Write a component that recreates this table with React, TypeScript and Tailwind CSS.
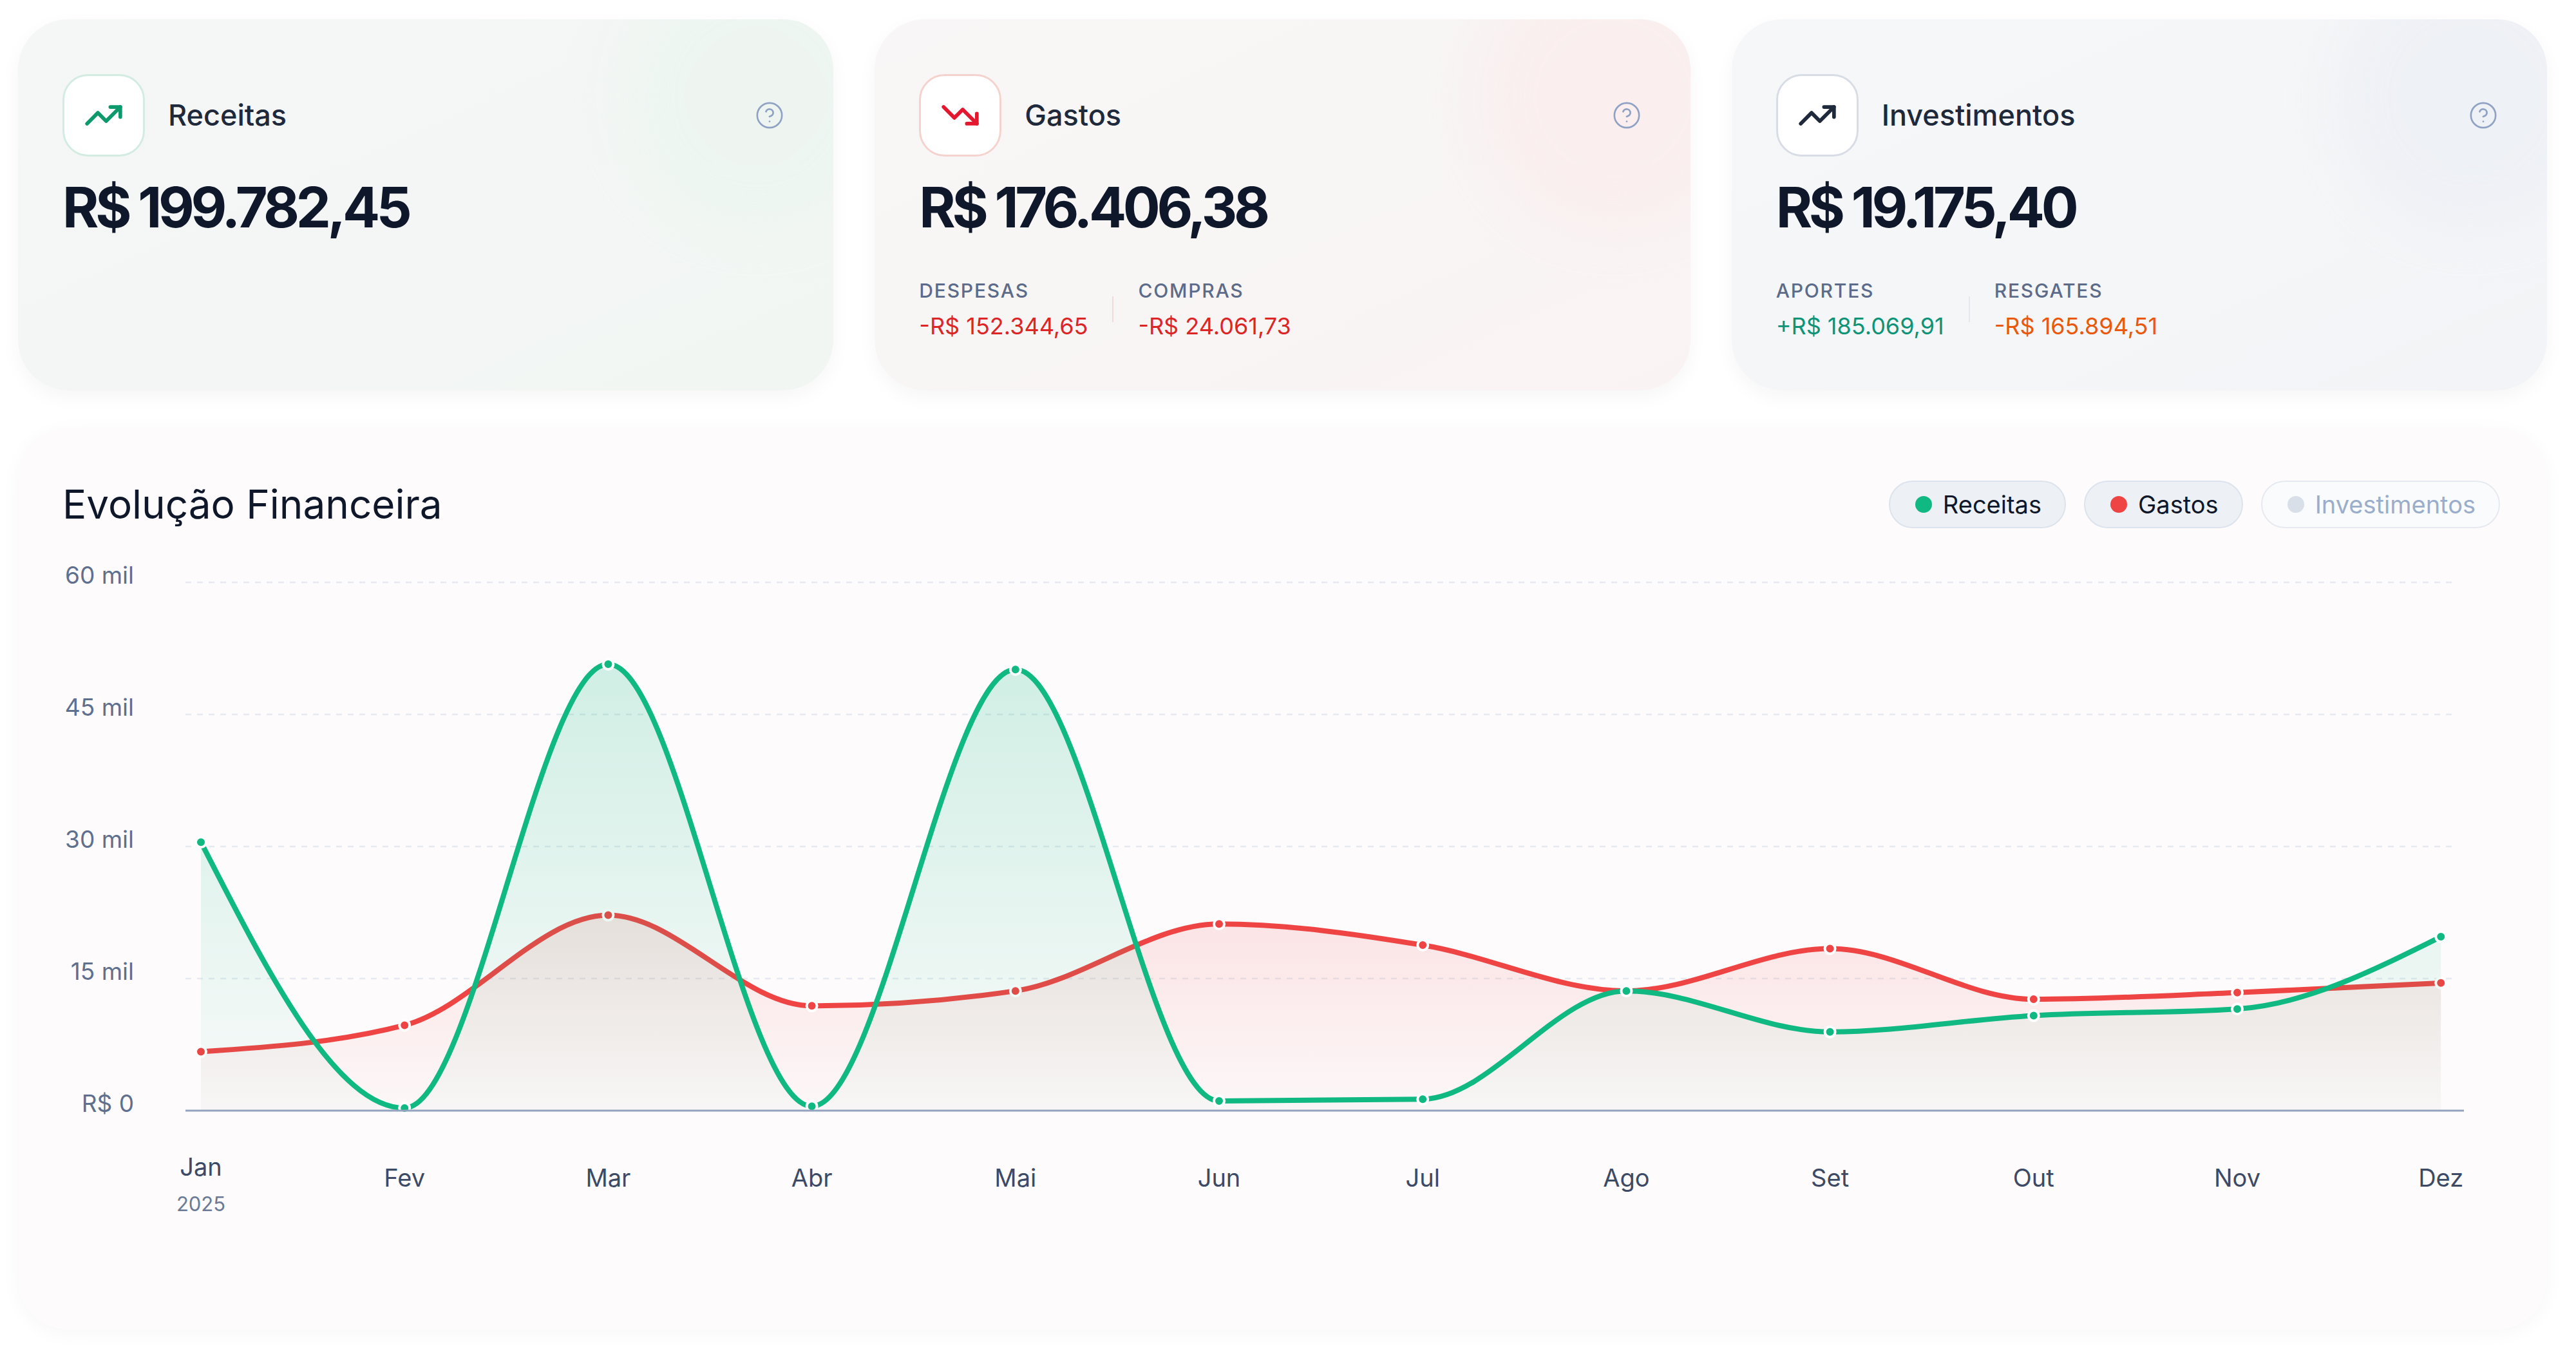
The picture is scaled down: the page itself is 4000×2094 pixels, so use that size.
import { TrendingUp, TrendingDown, CircleHelp } from "lucide-react";

// valores mensais (R$)
const months = ["Jan", "Fev", "Mar", "Abr", "Mai", "Jun", "Jul", "Ago", "Set", "Out", "Nov", "Dez"];
const receitas = [30500, 300, 50700, 500, 50100, 1100, 1300, 13600, 8950, 10800, 11550, 19750];
const gastos = [6700, 9700, 22200, 11900, 13600, 21200, 18800, 13600, 18400, 12650, 13400, 14500];

const X0 = 284;
const STEP = 316.2;
const BASE = 864;
const TOP = 44;
const xOf = (i: number) => X0 + i * STEP;
const yOf = (v: number) => BASE - (v / 60000) * (BASE - TOP);

type Pt = [number, number];

// curva monotone (mesma ideia do d3 curveMonotoneX)
function monotonePath(pts: Pt[]) {
  const n = pts.length;
  const m: number[] = new Array(n).fill(0);
  for (let i = 1; i < n - 1; i++) {
    const [x0, y0] = pts[i - 1];
    const [x1, y1] = pts[i];
    const [x2, y2] = pts[i + 1];
    const h0 = x1 - x0;
    const h1 = x2 - x1;
    const s0 = (y1 - y0) / h0;
    const s1 = (y2 - y1) / h1;
    const p = (s0 * h1 + s1 * h0) / (h0 + h1);
    m[i] = (Math.sign(s0) + Math.sign(s1)) * Math.min(Math.abs(s0), Math.abs(s1), 0.5 * Math.abs(p)) || 0;
  }
  m[0] = (3 * (pts[1][1] - pts[0][1]) / (pts[1][0] - pts[0][0]) - m[1]) / 2;
  m[n - 1] = (3 * (pts[n - 1][1] - pts[n - 2][1]) / (pts[n - 1][0] - pts[n - 2][0]) - m[n - 2]) / 2;
  let d = `M${pts[0][0]},${pts[0][1]}`;
  for (let i = 0; i < n - 1; i++) {
    const [x0, y0] = pts[i];
    const [x1, y1] = pts[i + 1];
    const dx = (x1 - x0) / 3;
    d += ` C${x0 + dx},${y0 + dx * m[i]} ${x1 - dx},${y1 - dx * m[i + 1]} ${x1},${y1}`;
  }
  return d;
}

function Series({ data, color, grad }: { data: number[]; color: string; grad: string }) {
  const pts: Pt[] = data.map((v, i) => [xOf(i), yOf(v)]);
  const line = monotonePath(pts);
  const area = `${line} L${pts[pts.length - 1][0]},${BASE} L${pts[0][0]},${BASE} Z`;
  return (
    <g>
      <path d={area} fill={`url(#${grad})`} />
      <path d={line} fill="none" stroke={color} strokeWidth={8} strokeLinecap="round" />
      {pts.map(([x, y], i) => (
        <circle key={i} cx={x} cy={y} r={8} fill={color} stroke="#ffffff" strokeWidth={4} />
      ))}
    </g>
  );
}

function Chart() {
  const grid = [60000, 45000, 30000, 15000];
  const ticks = [
    { v: 60000, t: "60 mil" },
    { v: 45000, t: "45 mil" },
    { v: 30000, t: "30 mil" },
    { v: 15000, t: "15 mil" },
    { v: 0, t: "R$ 0" },
  ];
  return (
    <svg width={3927} height={1100} viewBox="0 0 3927 1100" className="block">
      <defs>
        <linearGradient id="gRec" x1="0" y1="0" x2="0" y2="1">
          <stop offset="0%" stopColor="#10b981" stopOpacity={0.19} />
          <stop offset="100%" stopColor="#10b981" stopOpacity={0.02} />
        </linearGradient>
        <linearGradient id="gGas" x1="0" y1="0" x2="0" y2="1">
          <stop offset="0%" stopColor="#ef4444" stopOpacity={0.13} />
          <stop offset="100%" stopColor="#ef4444" stopOpacity={0.02} />
        </linearGradient>
      </defs>
      {grid.map((v) => (
        <line key={v} x1={260} x2={3785} y1={yOf(v)} y2={yOf(v)} stroke="#e6e9ef" strokeWidth={2.5} strokeDasharray="9 9" />
      ))}
      {ticks.map((k) => (
        <text
          key={k.t}
          x={180}
          y={yOf(k.v) - 8}
          textAnchor="end"
          dominantBaseline="middle"
          fontSize={37}
          fill="#5f6f8e"
          fontFamily="Inter, sans-serif"
        >
          {k.t}
        </text>
      ))}
      <Series data={gastos} color="#ef4444" grad="gGas" />
      <Series data={receitas} color="#10b981" grad="gRec" />
      <line x1={260} x2={3798} y1={BASE} y2={BASE} stroke="#94a3bd" strokeWidth={3} />
      {months.map((m, i) =>
        i === 0 ? (
          <g key={m}>
            <text x={xOf(i)} y={955} textAnchor="middle" dominantBaseline="middle" fontSize={38} fill="#3c4a66" fontFamily="Inter, sans-serif">
              {m}
            </text>
            <text x={xOf(i)} y={1012} textAnchor="middle" dominantBaseline="middle" fontSize={31} fill="#6b7a96" fontFamily="Inter, sans-serif">
              2025
            </text>
          </g>
        ) : (
          <text key={m} x={xOf(i)} y={972} textAnchor="middle" dominantBaseline="middle" fontSize={38} fill="#3c4a66" fontFamily="Inter, sans-serif">
            {m}
          </text>
        )
      )}
    </svg>
  );
}

function SubValue({ label, value, color }: { label: string; value: string; color: string }) {
  return (
    <div className="flex flex-col gap-[22px]">
      <span className="text-[30px] leading-none font-medium tracking-[0.06em] uppercase text-[#5c6b89]">{label}</span>
      <span className={`text-[36px] leading-none ${color}`}>{value}</span>
    </div>
  );
}

export default function App() {
  return (
    <div className="min-h-screen bg-white font-['Inter','Noto_Sans',sans-serif] pl-[28px] pr-[45px] pt-[30px] pb-[30px]">
      <div className="grid grid-cols-3 gap-[64px]">
        {/* Receitas */}
        <div className="relative h-[576px] overflow-hidden rounded-[78px] bg-gradient-to-br from-[#f5f6f6] via-[#f4f6f5] to-[#f1f6f3] shadow-[0_10px_30px_rgba(15,23,42,0.04)] pl-[69px] pr-[76px] pt-[85px]">
          <div className="absolute -right-[90px] -top-[90px] h-[420px] w-[420px] rounded-full bg-[#ebf6f0] opacity-70 blur-2xl" />
          <div className="relative flex items-center">
            <div className="flex h-[128px] w-[128px] items-center justify-center rounded-[40px] border-[3px] border-[#d3ece2] bg-white">
              <TrendingUp size={62} strokeWidth={2.2} className="text-[#0c9a6c]" />
            </div>
            <span className="ml-[36px] text-[45px] font-medium text-[#1e293b]">Receitas</span>
            <CircleHelp size={46} strokeWidth={1.4} className="ml-auto text-[#8fa2c4]" />
          </div>
          <div className="relative mt-[36px] text-[86px] font-bold leading-none tracking-[-0.062em] text-[#0f172a]">R$ 199.782,45</div>
        </div>

        {/* Gastos */}
        <div className="relative h-[576px] overflow-hidden rounded-[78px] bg-gradient-to-br from-[#f8f6f6] via-[#f8f5f5] to-[#faf3f3] shadow-[0_10px_30px_rgba(15,23,42,0.04)] pl-[69px] pr-[76px] pt-[85px]">
          <div className="absolute -right-[90px] -top-[90px] h-[420px] w-[420px] rounded-full bg-[#fbecec] opacity-70 blur-2xl" />
          <div className="relative flex items-center">
            <div className="flex h-[128px] w-[128px] items-center justify-center rounded-[40px] border-[3px] border-[#f4d3cf] bg-white">
              <TrendingDown size={62} strokeWidth={2.2} className="text-[#e3172e]" />
            </div>
            <span className="ml-[36px] text-[45px] font-medium text-[#1e293b]">Gastos</span>
            <CircleHelp size={46} strokeWidth={1.4} className="ml-auto text-[#8fa2c4]" />
          </div>
          <div className="relative mt-[36px] text-[86px] font-bold leading-none tracking-[-0.062em] text-[#0f172a]">R$ 176.406,38</div>
          <div className="relative mt-[71px] flex items-center gap-[38px]">
            <SubValue label="Despesas" value="-R$ 152.344,65" color="text-[#dc2626]" />
            <div className="h-[40px] w-[2px] bg-[#f3dada]" />
            <SubValue label="Compras" value="-R$ 24.061,73" color="text-[#dc2626]" />
          </div>
        </div>

        {/* Investimentos */}
        <div className="relative h-[576px] overflow-hidden rounded-[78px] bg-gradient-to-br from-[#f6f7f8] via-[#f5f6f8] to-[#f3f4f7] shadow-[0_10px_30px_rgba(15,23,42,0.04)] pl-[69px] pr-[76px] pt-[85px]">
          <div className="absolute -right-[90px] -top-[90px] h-[420px] w-[420px] rounded-full bg-[#eceff4] opacity-70 blur-2xl" />
          <div className="relative flex items-center">
            <div className="flex h-[128px] w-[128px] items-center justify-center rounded-[40px] border-[3px] border-[#d8dde5] bg-white">
              <TrendingUp size={62} strokeWidth={2.2} className="text-[#1e293b]" />
            </div>
            <span className="ml-[36px] text-[45px] font-medium text-[#1e293b]">Investimentos</span>
            <CircleHelp size={46} strokeWidth={1.4} className="ml-auto text-[#8fa2c4]" />
          </div>
          <div className="relative mt-[36px] text-[86px] font-bold leading-none tracking-[-0.062em] text-[#0f172a]">R$ 19.175,40</div>
          <div className="relative mt-[71px] flex items-center gap-[38px]">
            <SubValue label="Aportes" value="+R$ 185.069,91" color="text-[#0d9478]" />
            <div className="h-[40px] w-[2px] bg-[#e3e7ee]" />
            <SubValue label="Resgates" value="-R$ 165.894,51" color="text-[#ea580c]" />
          </div>
        </div>
      </div>

      {/* Evolução Financeira */}
      <div className="mt-[58px] h-[1400px] rounded-[78px] bg-[#fdfbfc] pt-[82px] shadow-[0_6px_30px_rgba(15,23,42,0.035)]">
        <div className="flex h-[74px] items-center pl-[69px] pr-[73px]">
          <h2 className="text-[62px] leading-none text-[#0f172a]">Evolução Financeira</h2>
          <div className="ml-auto flex items-center gap-[28px]">
            <div className="flex h-[74px] items-center gap-[17px] rounded-full border-2 border-[#dde3ec] bg-[#edf1f6] pl-[39px] pr-[36px]">
              <span className="h-[26px] w-[26px] rounded-full bg-[#10b981]" />
              <span className="text-[38px] text-[#0f172a]">Receitas</span>
            </div>
            <div className="flex h-[74px] items-center gap-[17px] rounded-full border-2 border-[#dde3ec] bg-[#edf1f6] pl-[39px] pr-[36px]">
              <span className="h-[26px] w-[26px] rounded-full bg-[#ef4444]" />
              <span className="text-[38px] text-[#0f172a]">Gastos</span>
            </div>
            <div className="flex h-[74px] items-center gap-[17px] rounded-full border-2 border-[#e6eaf0] bg-[#fafbfc] pl-[39px] pr-[36px]">
              <span className="h-[26px] w-[26px] rounded-full bg-[#d8dfe9]" />
              <span className="text-[38px] text-[#9aaecb]">Investimentos</span>
            </div>
          </div>
        </div>
        <div className="mt-[40px]">
          <Chart />
        </div>
      </div>
    </div>
  );
}
